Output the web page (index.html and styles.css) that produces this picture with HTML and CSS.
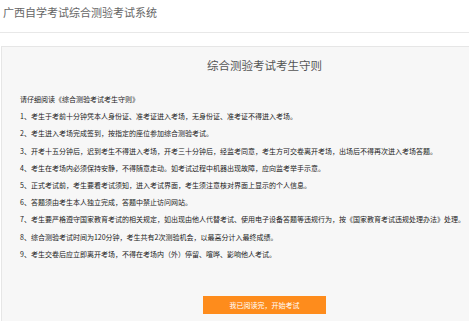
FILE: index.html
```html
<!DOCTYPE html>
<html>
    <head>
        <meta charset="UTF-8">
        <meta name="viewport" content="width=device-width, initial-scale=1">
        <title>广西自学考试综合测验考试系统</title>
        <link rel="stylesheet" href="styles.css">
    </head>
    <body>
        <div class="page">
            <div class="header">
                <span class="site-title">广西自学考试综合测验考试系统</span>
            </div>

            <div class="panel">
                <div class="panel-title">综合测验考试考生守则</div>

                <div class="rules">
                    <p>请仔细阅读《综合测验考试考生守则》</p>
                    <p>1、考生于考前十分钟凭本人身份证、准考证进入考场，无身份证、准考证不得进入考场。</p>
                    <p>2、考生进入考场完成签到，按指定的座位参加综合测验考试。</p>
                    <p>3、开考十五分钟后，迟到考生不得进入考场，开考三十分钟后，经监考同意，考生方可交卷离开考场，出场后不得再次进入考场答题。</p>
                    <p>4、考生在考场内必须保持安静，不得随意走动。如考试过程中机器出现故障，应向监考举手示意。</p>
                    <p>5、正式考试前，考生要看考试须知，进入考试界面，考生须注意核对界面上显示的个人信息。</p>
                    <p>6、答题须由考生本人独立完成，答题中禁止访问网站。</p>
                    <p>7、考生要严格遵守国家教育考试的相关规定，如出现由他人代替考试、使用电子设备答题等违规行为，按《国家教育考试违规处理办法》处理。</p>
                    <p>8、综合测验考试时间为120分钟，考生共有2次测验机会，以最高分计入最终成绩。</p>
                    <p>9、考生交卷后应立即离开考场，不得在考场内（外）停留、喧哗、影响他人考试。</p>
                </div>

                <div class="actions">
                    <button class="button">我已阅读完，开始考试</button>
                </div>
            </div>
        </div>
    </body>
</html>
```

FILE: styles.css
```css
html, body {
    margin: 0;
    padding: 0;
    font-family: "Noto Sans CJK SC", "Noto Sans", sans-serif;
    background: #fff;
    overflow: hidden;
}
.page {
    width: 530px;
}
.header {
    height: 32px;
    border-bottom: 1px solid #e8e8e8;
}
.site-title {
    display: block;
    padding-left: 3px;
    font-size: 11px;
    line-height: 25px;
    color: #666;
}
.panel {
    margin: 13px 0 0 1px;
    width: 527px;
    min-height: 300px;
    box-sizing: border-box;
    border: 1px solid #e6e6e6;
    background-color: #f7f7f7;
}
.panel-title {
    padding-top: 10px;
    text-align: center;
    font-size: 11.5px;
    line-height: 16px;
    color: #555;
}
.rules {
    margin-top: 18px;
    padding-left: 18px;
    font-size: 7px;
    line-height: 17.2px;
    color: #222;
}
.rules > p {
    margin: 0;
    white-space: nowrap;
}
.actions {
    display: flex;
    justify-content: center;
    margin-top: 33px;
}
.button {
    width: 123px;
    height: 18px;
    padding: 0;
    border: none;
    border-radius: 0;
    background-color: #fe8c1c;
    color: #fff;
    font-family: "Noto Sans CJK SC", sans-serif;
    font-size: 7px;
}
```
